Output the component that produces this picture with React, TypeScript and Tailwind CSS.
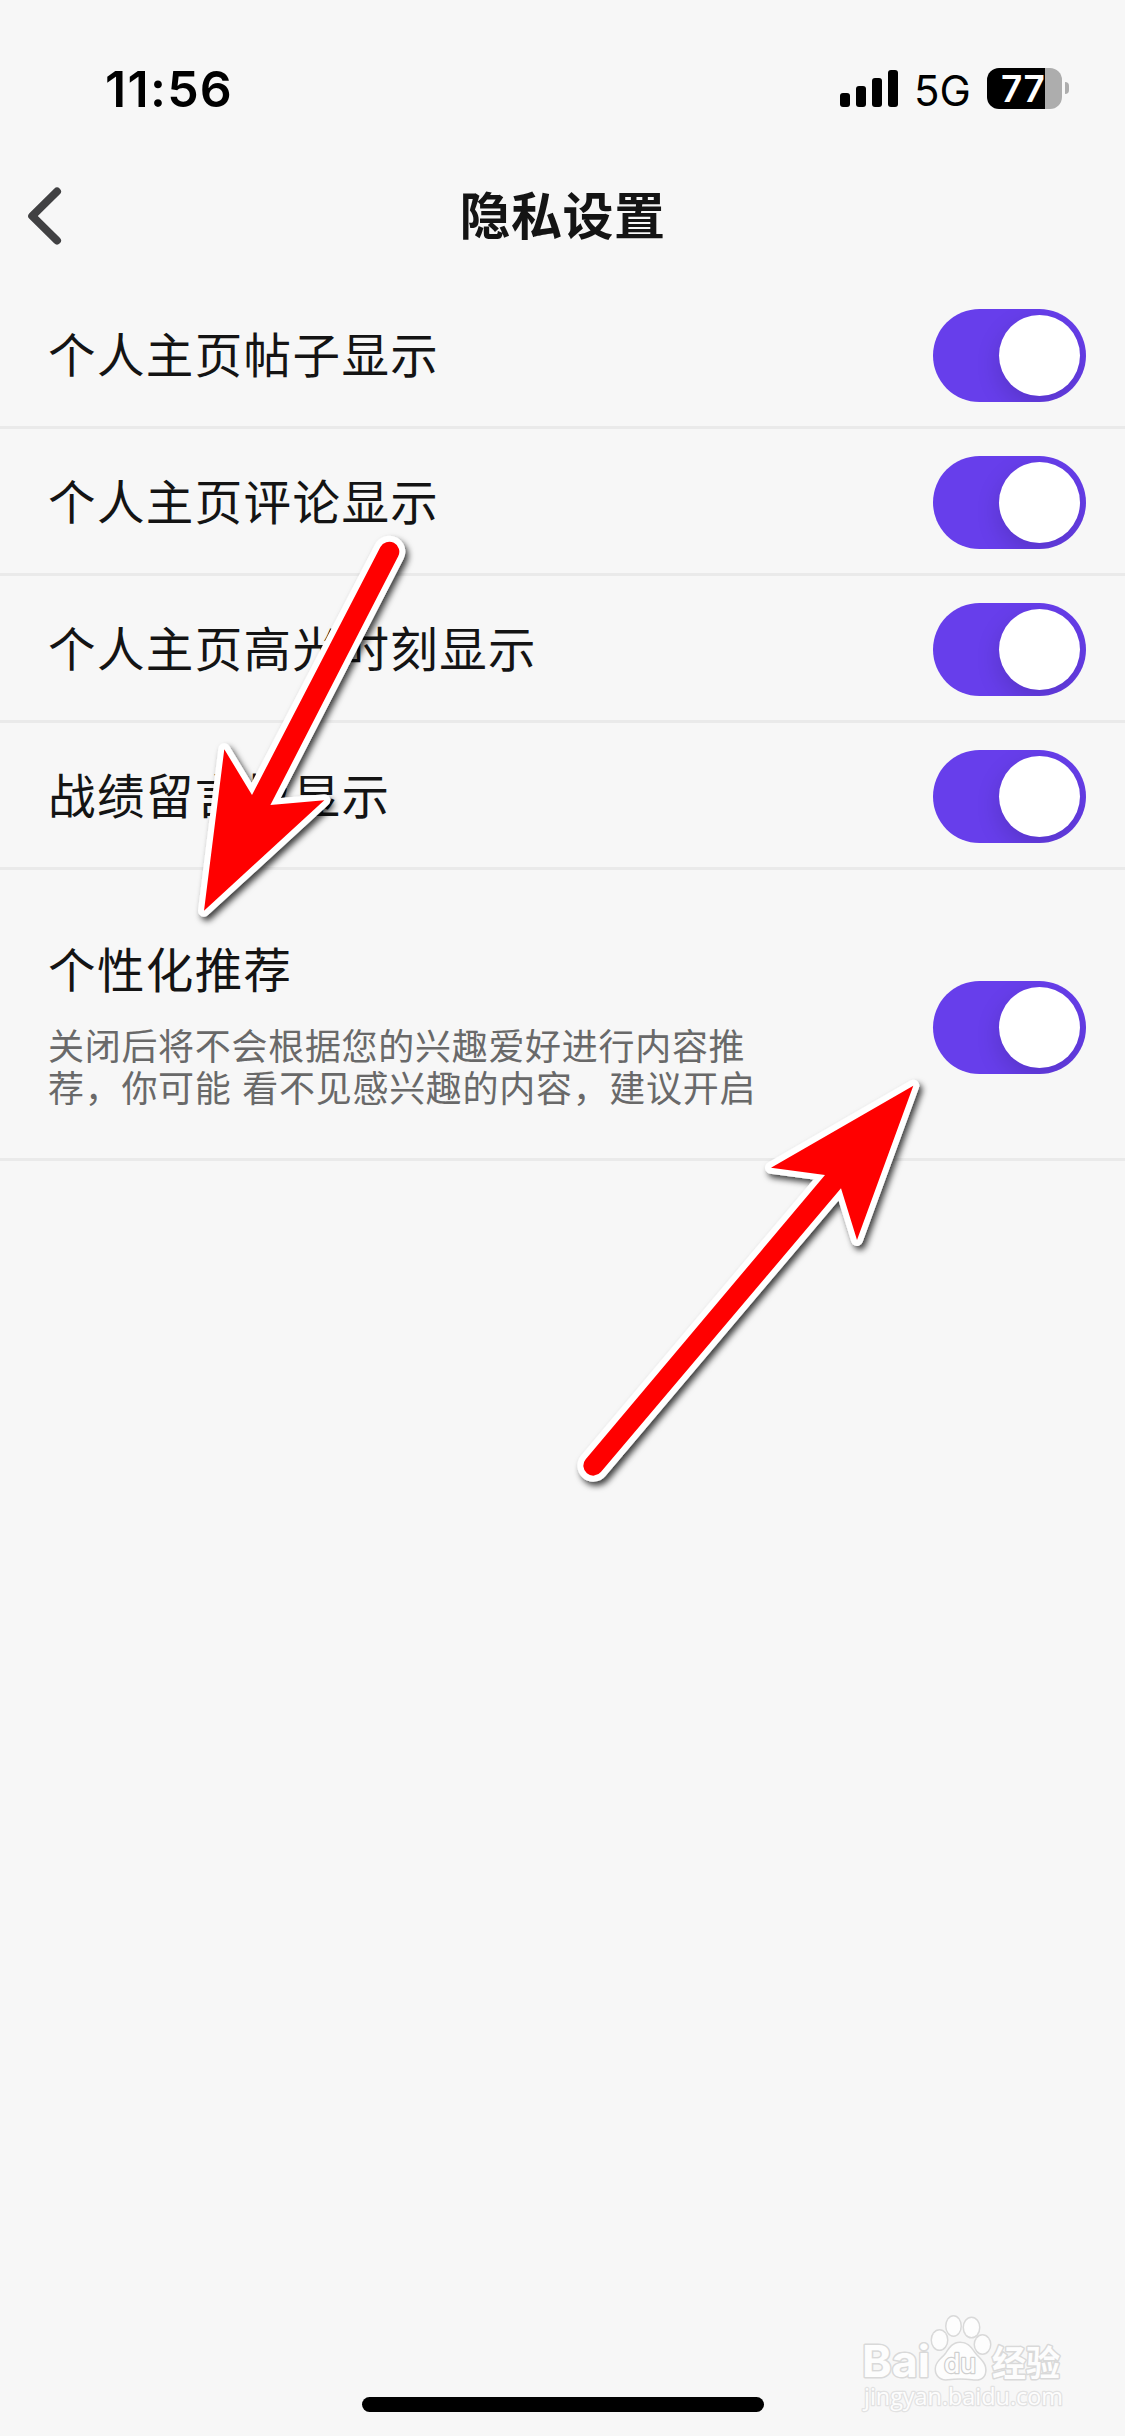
import React from "react";

const sans = "font-['Inter','Noto_Sans_CJK_SC',sans-serif]";

function StatusBar() {
  return (
    <header className="flex h-[141px] items-start justify-between pt-[59px] pr-[56px] pl-[105px] text-black">
      <span className="text-[50px] leading-[60px] font-semibold tracking-[1.3px]">11:56</span>
      <div className="flex h-[60px] items-start">
        <div className="mt-[11px] flex h-[37px] items-end gap-[6px]">
          <i className="h-[14px] w-[10px] rounded-[3px] bg-black" />
          <i className="h-[21px] w-[10px] rounded-[3px] bg-black" />
          <i className="h-[29px] w-[10px] rounded-[3px] bg-black" />
          <i className="h-[37px] w-[10px] rounded-[3px] bg-black" />
        </div>
        <span className="ml-[16px] w-[73px] text-[42px] leading-[63px]">5G</span>
        <div className="mt-[9px] flex h-[41px] w-[75px] rounded-[12px] bg-[linear-gradient(90deg,#000_58px,#adadad_58px)] pl-[14px] text-[37px] leading-[42px] font-semibold tracking-[0.5px] whitespace-nowrap text-white">
          77
        </div>
        <i className="mt-[23px] ml-[3px] h-[12px] w-[4px] rounded-r-full bg-[#adadad]" />
      </div>
    </header>
  );
}

function NavBar() {
  return (
    <nav className="grid h-[141px] grid-cols-[1fr_auto_1fr] items-center pt-[8px]">
      <button className="ml-[24px] h-[64px] w-[44px]" aria-label="返回">
        <svg viewBox="0 0 44 64" className="h-[64px] w-[44px]" fill="none">
          <path d="M33 7.500 8.200 32 33 56.500" stroke="#414143" strokeWidth="8" strokeLinecap="round" strokeLinejoin="round" />
        </svg>
      </button>
      <h1 className="pt-[2px] text-[51px] leading-[72px] font-bold tracking-[0.5px] text-[#141414]">隐私设置</h1>
    </nav>
  );
}

function Toggle() {
  return (
    <div className="flex h-[93px] w-[153px] shrink-0 justify-end overflow-hidden rounded-full bg-[#673eeb] p-[6px]">
      <div className="size-[81px] rounded-full bg-white shadow-[0_9px_24px_rgba(0,0,0,0.15)]" />
    </div>
  );
}

const items = ["个人主页帖子显示", "个人主页评论显示", "个人主页高光时刻显示", "战绩留言板显示"];

function Label({ children }: { children: React.ReactNode }) {
  return <span className="block text-[47.5px] leading-[68px] tracking-[1.4px] text-[#141414]">{children}</span>;
}

function Arrow({ d }: { d: string }) {
  return (
    <g filter="url(#drop)">
      <path d={d} fill="#fff" stroke="#fff" strokeWidth="12" strokeLinejoin="round" />
      <path d={d} fill="#f00" />
    </g>
  );
}

function Arrows() {
  return (
    <svg viewBox="0 0 1125 2436" className="pointer-events-none absolute inset-0 h-[2436px] w-[1125px]">
      <defs>
        <filter id="drop" x="-10%" y="-10%" width="120%" height="120%">
          <feDropShadow dx="3" dy="4" stdDeviation="3" floodColor="#000" floodOpacity="0.75" />
        </filter>
      </defs>
      <Arrow d="M204 910.7 224.3 749.3 252 795 380.4 547.1A10 10 0 0 1 398.2 556.3L270.4 805 324.3 800.3Z" />
      <Arrow d="M913.3 1085.7 771 1167.7 825 1175 585.7 1459.3A9.9 9.9 0 0 0 600.9 1472.1L841 1188.3 857 1240Z" />
    </svg>
  );
}

function Watermark() {
  return (
    <svg
      viewBox="0 0 225 110"
      className="absolute top-[2306px] left-[855px] h-[110px] w-[225px]"
      fill="#fdfdfd"
      stroke="#d9d9d9"
      strokeWidth="3"
      paintOrder="stroke"
      strokeLinejoin="round"
    >
      <text x="7" y="71" fontFamily="Inter, sans-serif" fontWeight="700" fontSize="44" textLength="68" lengthAdjust="spacingAndGlyphs">
        Bai
      </text>
      <ellipse cx="84.5" cy="34" rx="7.5" ry="9.5" />
      <ellipse cx="98.5" cy="20" rx="7" ry="9.5" />
      <ellipse cx="116.5" cy="21.5" rx="7.5" ry="9.5" />
      <ellipse cx="127.5" cy="38.5" rx="7.5" ry="9" />
      <path d="M105 37c9 0 11 6 16 12 6 6 10 10 9 17-1 7-7 8-13 7-8-1-16-1-24 0-8 1-12-4-12-10 0-7 6-10 10-15 4-6 7-11 14-11Z" />
      <text x="89" y="67" fontFamily="Inter, sans-serif" fontWeight="500" fontSize="27" textLength="32" lengthAdjust="spacingAndGlyphs" stroke="#cfcfcf" strokeWidth="2.5">
        du
      </text>
      <text x="137" y="70" fontFamily="'Noto Sans CJK SC', sans-serif" fontWeight="700" fontSize="35" textLength="68" lengthAdjust="spacingAndGlyphs">
        经验
      </text>
      <text x="9" y="99" fontFamily="'Open Sans', sans-serif" fontSize="24" textLength="199" lengthAdjust="spacingAndGlyphs" stroke="#e2e2e2" strokeWidth="2.5">
        jingyan.baidu.com
      </text>
    </svg>
  );
}

export default function App() {
  return (
    <div className={`relative flex h-[2436px] w-[1125px] flex-col overflow-hidden bg-[#f7f7f7] ${sans}`}>
      <StatusBar />
      <NavBar />
      <main className="flex-1">
        {items.map((item) => (
          <div key={item} className="flex h-[147px] items-start justify-between border-b-[3px] border-[#eaeaea] pt-[27px] pr-[39px] pl-[48px]">
            <div className="pt-[13px]">
              <Label>{item}</Label>
            </div>
            <Toggle />
          </div>
        ))}
        <div className="flex h-[291px] items-start justify-between border-b-[3px] border-[#eaeaea] pr-[39px] pl-[48px]">
          <div className="pt-[67px]">
            <Label>个性化推荐</Label>
            <p className="mt-[21px] text-[36px] leading-[42px] tracking-[0.7px] whitespace-nowrap text-[#696969]">
              关闭后将不会根据您的兴趣爱好进行内容推
              <br />
              荐，你可能 看不见感兴趣的内容，建议开启
            </p>
          </div>
          <div className="pt-[111px]">
            <Toggle />
          </div>
        </div>
      </main>
      <footer className="flex justify-center pb-[24px]">
        <div className="h-[15px] w-[402px] rounded-full bg-black" />
      </footer>
      <Watermark />
      <Arrows />
    </div>
  );
}
